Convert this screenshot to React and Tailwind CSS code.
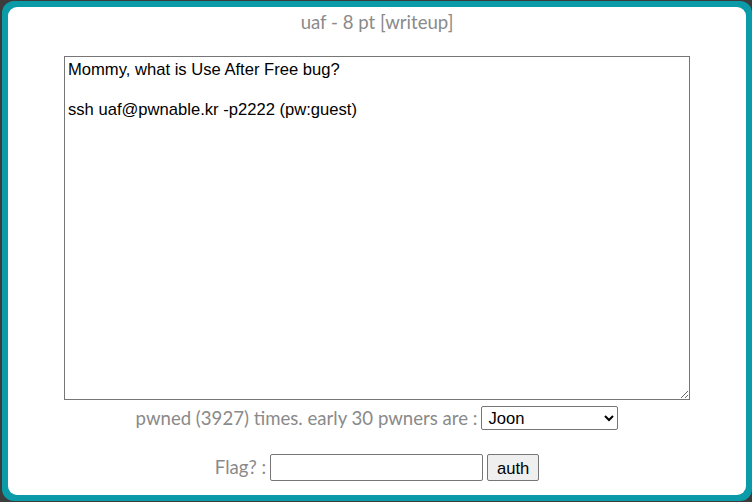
export default function App() {
  return (
    <div className="w-[752px] h-[502px] bg-[#3c3c3c] pt-[1px] pl-[2px] overflow-hidden">
      <div className="w-[750px] h-[500px] rounded-[12px] bg-[#0b9aa8] p-[6px]">
        <div className="h-full w-full rounded-[9px] bg-white flex flex-col items-center">
          <div className="mt-[3px] text-[18.6px] leading-[24px] text-[#8a8a8a] font-['Lato',sans-serif]">uaf - 8 pt [writeup]</div>
          <textarea
            className="mt-[22px] w-[626px] h-[344px] border border-[#767676] px-[3px] pt-[3px] text-[16.6px] leading-[20px] text-black font-['Liberation_Sans',Arial,sans-serif] resize outline-none"
            defaultValue={"Mommy, what is Use After Free bug?\n\nssh uaf@pwnable.kr -p2222 (pw:guest)"}
          />
          <div className="mt-[6px] h-[24px] flex items-center text-[18.6px] leading-[24px] text-[#8a8a8a] font-['Lato',sans-serif]">
            <span>pwned (3927) times. early 30 pwners are :</span>
            <select className="ml-[4px] w-[137px] h-[24px] border border-[#767676] rounded-[2px] text-[16.6px] text-black font-['Liberation_Sans',Arial,sans-serif] pl-[2px] bg-white">
              <option>Joon</option>
            </select>
          </div>
          <div className="mt-[24px] h-[27px] flex items-center text-[18.6px] leading-[27px] text-[#8a8a8a] font-['Lato',sans-serif]">
            <span>Flag? :</span>
            <input className="ml-[4px] w-[213px] h-[27px] border border-[#767676] rounded-[2px] outline-none" />
            <button className="ml-[4px] w-[52px] h-[27px] border border-[#767676] rounded-[2px] bg-[#efefef] text-[16.6px] text-black font-['Liberation_Sans',Arial,sans-serif]">auth</button>
          </div>
        </div>
      </div>
    </div>
  );
}
